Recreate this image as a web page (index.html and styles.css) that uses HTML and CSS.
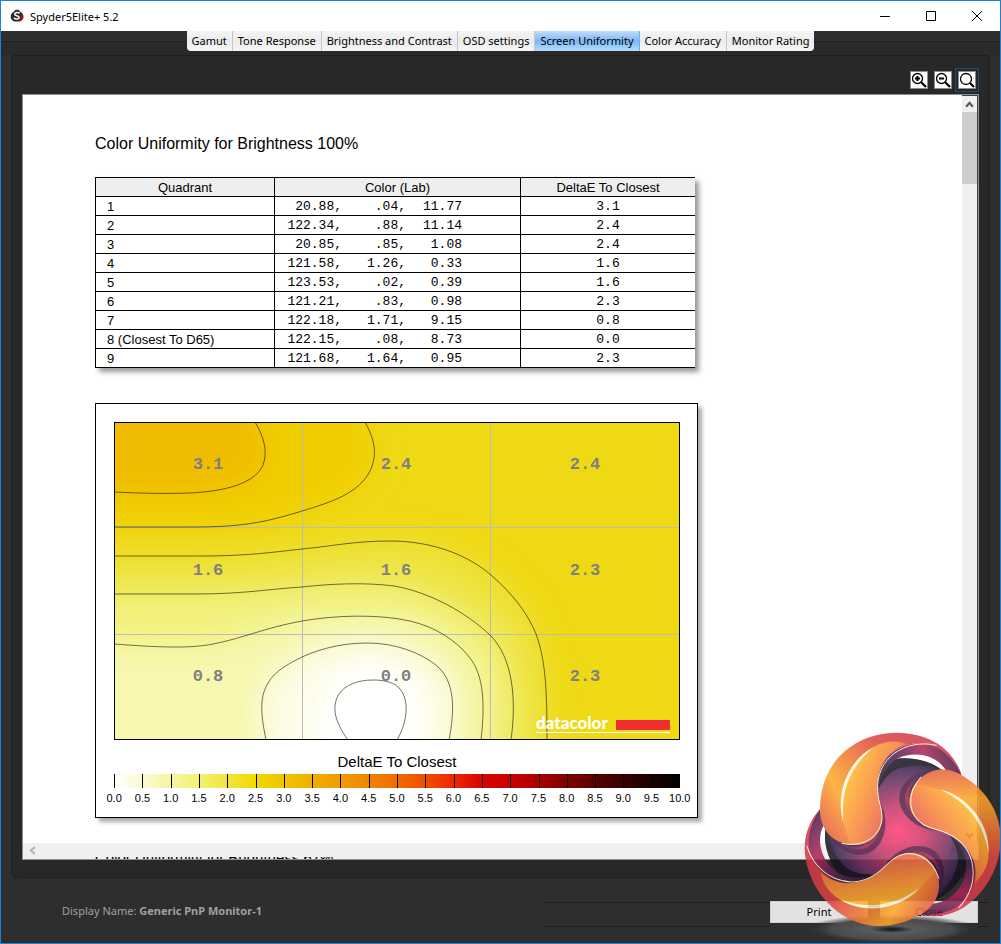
FILE: index.html
```html
<!DOCTYPE html>
<html lang="en">
<head>
<meta charset="utf-8">
<title>Spyder5Elite+ 5.2</title>
<link rel="stylesheet" href="styles.css">
</head>
<body>
<div class="window">
  <header class="titlebar">
    <svg class="app-icon" viewBox="0 0 14 14" aria-hidden="true">
      <path d="M4 2.500L5.500 .8h3L10 2.500l2 1.500 1.200 2v3L12 11l-2 1.500H4L2 11 .8 9V6L2 4z" fill="#2b2629"/>
      <path d="M11 5l2.300 1.500v3L11 12H8l3-3z" fill="#a01425"/>
      <path d="M9.800 4.200C8.500 3 4.800 3 4.600 5.200c0 1.800 4.600 1.300 4.600 3.300 0 1.700-3.500 2-5.400.4" fill="none" stroke="#fff" stroke-width="1.500"/>
    </svg>
    <h1 class="app-title">Spyder5Elite+ 5.2</h1>
    <button class="win-btn" aria-label="Minimize"><svg viewBox="0 0 12 12"><path d="M1 6.500h10"/></svg></button>
    <button class="win-btn" aria-label="Maximize"><svg viewBox="0 0 12 12"><path d="M1.500 1.500h9v9h-9z"/></svg></button>
    <button class="win-btn" aria-label="Close window"><svg viewBox="0 0 12 12"><path d="M1 1l10 10M11 1L1 11"/></svg></button>
  </header>

  <nav class="tabbar">
    <div class="tabs">
      <button class="tab">Gamut</button>
      <button class="tab">Tone Response</button>
      <button class="tab">Brightness and Contrast</button>
      <button class="tab">OSD settings</button>
      <button class="tab active">Screen Uniformity</button>
      <button class="tab">Color Accuracy</button>
      <button class="tab">Monitor Rating</button>
    </div>
  </nav>

  <main class="panel">
    <div class="toolbar">
      <button class="tool" aria-label="Zoom in"><svg viewBox="0 0 16 16"><circle cx="6.500" cy="6.500" r="5"/><path d="M4 6.500h5M6.500 4v5" stroke-width="2"/><path d="M10 10l5 5" stroke-width="2.200"/></svg></button>
      <button class="tool" aria-label="Zoom out"><svg viewBox="0 0 16 16"><circle cx="6.500" cy="6.500" r="5"/><path d="M4 6.500h5" stroke-width="2"/><path d="M10 10l5 5" stroke-width="2.200"/></svg></button>
      <button class="tool focused" aria-label="Zoom to fit"><svg viewBox="0 0 16 16"><circle cx="7" cy="7" r="5.500"/><path d="M11 11l4 4" stroke-width="2.200"/></svg></button>
    </div>

    <div class="report">
      <div class="page">
        <h2 class="heading">Color Uniformity for Brightness 100%</h2>
        <table class="data">
          <colgroup><col class="c-quad"><col class="c-lab"><col class="c-delta"></colgroup>
          <thead><tr><th>Quadrant</th><th>Color (Lab)</th><th>DeltaE To Closest</th></tr></thead>
          <tbody>
            <tr><td>1</td><td class="lab"><span>20.88,</span><span>.04,</span><span>11.77</span></td><td class="num">3.1</td></tr>
            <tr><td>2</td><td class="lab"><span>122.34,</span><span>.88,</span><span>11.14</span></td><td class="num">2.4</td></tr>
            <tr><td>3</td><td class="lab"><span>20.85,</span><span>.85,</span><span>1.08</span></td><td class="num">2.4</td></tr>
            <tr><td>4</td><td class="lab"><span>121.58,</span><span>1.26,</span><span>0.33</span></td><td class="num">1.6</td></tr>
            <tr><td>5</td><td class="lab"><span>123.53,</span><span>.02,</span><span>0.39</span></td><td class="num">1.6</td></tr>
            <tr><td>6</td><td class="lab"><span>121.21,</span><span>.83,</span><span>0.98</span></td><td class="num">2.3</td></tr>
            <tr><td>7</td><td class="lab"><span>122.18,</span><span>1.71,</span><span>9.15</span></td><td class="num">0.8</td></tr>
            <tr><td>8 (Closest To D65)</td><td class="lab"><span>122.15,</span><span>.08,</span><span>8.73</span></td><td class="num">0.0</td></tr>
            <tr><td>9</td><td class="lab"><span>121.68,</span><span>1.64,</span><span>0.95</span></td><td class="num">2.3</td></tr>
          </tbody>
        </table>

        <section class="chart">
          <svg class="plot" viewBox="0 0 566 318" role="img" aria-label="DeltaE contour map">
            <defs>
              <filter id="soft" filterUnits="userSpaceOnUse" x="-120" y="-120" width="800" height="560"><feGaussianBlur stdDeviation="14"/></filter>
              <clipPath id="plotClip"><rect width="566" height="318"/></clipPath>
            </defs>
            <g clip-path="url(#plotClip)">
              <rect width="566" height="318" fill="#efd915"/>
              <g filter="url(#soft)">
                <path fill="#f0cd00" d="M251-90V1C262 20 263 35 256 49C246 68 215 82 188 89C150 101 125 105 80 105H-90V-90z"/>
                <path fill="#f0bc00" d="M141-90V1C150 15 154 30 149 43C143 57 122 69 75 71C45 72 25 71 0 70H-90V-90z"/>
                <path fill="#eee443" d="M-90 134H85C135 134 160 130 188 127C220 124 240 119 276 119C320 119 352 136 377 153C400 174 414 194 422 212C430 234 433 256 433 317V410H-90z"/>
                <path fill="#f2f27e" d="M-90 172H80C130 172 155 167 188 165C215 162 250 160 280 164C315 170 350 188 377 214C396 242 400 268 397 317V410H-90z"/>
                <path fill="#f7f7b0" d="M-90 222H1C40 225 75 227 99 222C125 217 150 206 188 199C220 193 265 190 296 199C320 206 343 221 356 236C368 254 371 280 367 317V410H-90z"/>
                <path fill="#fdfde8" d="M152 410V317C147 293 145 278 154 261C160 252 174 242 188 235C215 223 235 221 254 221C278 222 305 229 323 244C338 262 341 282 335 317V410z"/>
                <path fill="#fff" d="M204 410V317C200 265 219 242 259 239C302 243 315 275 305 317V410z"/>
              </g>
              <g class="grid"><path d="M188.500 0V318M376.500 0V318M0 105.500H566M0 212.500H566"/></g>
              <g class="contours">
                <path d="M141 0C150 15 154 30 149 43C143 57 122 69 75 71C45 72 25 71 0 70"/>
                <path d="M251 0C262 20 263 34 256 49C245 71 218 80 188 89C150 101 125 105 80 105H0"/>
                <path d="M0 134H85C135 134 160 130 188 127C220 124 240 119 276 119C320 119 355 134 377 153C399 172 414 192 422 212C431 237 433 262 433 318"/>
                <path d="M0 172H80C130 172 155 167 188 165C215 162 250 160 280 164C315 170 352 190 377 214C398 236 403 275 397 318"/>
                <path d="M0 222C40 225 75 227 99 222C130 216 150 206 188 199C222 193 265 192 296 199C322 205 343 219 356 236C370 254 371 283 367 318"/>
                <path d="M152 318C147 293 145 276 154 261C161 249 174 242 188 235C210 225 232 221 254 221C280 221 306 230 323 244C341 259 341 288 335 318"/>
                <path d="M234 318C221 300 217 285 225 272C231 263 244 258 259 258C272 258 281 261 286 267C296 279 293 301 283 318"/>
              </g>
              <g class="values">
                <text x="94" y="47">3.1</text><text x="282" y="47">2.4</text><text x="471" y="47">2.4</text>
                <text x="94" y="153">1.6</text><text x="282" y="153">1.6</text><text x="471" y="153">2.3</text>
                <text x="94" y="259">0.8</text><text x="282" y="259">0.0</text><text x="471" y="259">2.3</text>
              </g>
              <text class="brand" x="422" y="307">datacolor</text>
              <rect x="502" y="298" width="54" height="10" fill="#ee2e34"/>
              <path d="M422 310.500H556" stroke="#fff"/>
            </g>
            <rect x=".5" y=".5" width="565" height="317" fill="none" stroke="#000"/>
          </svg>
          <h3 class="legend-title">DeltaE To Closest</h3>
          <div class="scale"></div>
          <ol class="ticks">
            <li>0.0</li><li>0.5</li><li>1.0</li><li>1.5</li><li>2.0</li><li>2.5</li><li>3.0</li><li>3.5</li><li>4.0</li><li>4.5</li><li>5.0</li><li>5.5</li><li>6.0</li><li>6.5</li><li>7.0</li><li>7.5</li><li>8.0</li><li>8.5</li><li>9.0</li><li>9.5</li><li>10.0</li>
          </ol>
        </section>
      </div>
      <div class="vbar">
        <button class="arrow" aria-label="Scroll up"><svg viewBox="0 0 8 8"><path d="M1 6l3-3.500L7 6"/></svg></button>
        <div class="thumb"></div>
        <button class="arrow last" aria-label="Scroll down"><svg viewBox="0 0 8 8"><path d="M1 2l3 3.500L7 2"/></svg></button>
      </div>
      <div class="hbar">
        <button class="arrow dim" aria-label="Scroll left"><svg viewBox="0 0 8 8"><path d="M6 1L2.500 4 6 7"/></svg></button>
        <button class="arrow dim right" aria-label="Scroll right"><svg viewBox="0 0 8 8"><path d="M2 1l3.500 3L2 7"/></svg></button>
      </div>
      <div class="next-page"><span>Color Uniformity for Brightness 67%</span></div>
    </div>
  </main>

  <footer class="footer">
    <p class="display">Display Name: <strong>Generic PnP Monitor-1</strong></p>
    <div class="groove"></div>
    <div class="actions">
      <button class="action">Print</button>
      <button class="action">Close</button>
    </div>
    <div class="groove stub"></div>
  </footer>

  <svg class="watermark" viewBox="0 0 633 672" aria-hidden="true">
    <defs>
      <radialGradient id="core" gradientUnits="userSpaceOnUse" cx="339" cy="335" r="225">
        <stop offset="0" stop-color="#ff3c74"/><stop offset=".3" stop-color="#cf3868"/><stop offset=".62" stop-color="#7c3160"/><stop offset=".85" stop-color="#3a2550"/><stop offset="1" stop-color="#120d24"/>
      </radialGradient>
      <linearGradient id="outer" gradientUnits="userSpaceOnUse" x1="480" y1="70" x2="110" y2="320">
        <stop offset="0" stop-color="#cf3450"/><stop offset=".4" stop-color="#dc4440"/><stop offset=".8" stop-color="#ffa828"/><stop offset="1" stop-color="#e8643c"/>
      </linearGradient>
      <linearGradient id="inner" gradientUnits="userSpaceOnUse" x1="155" y1="240" x2="275" y2="290">
        <stop offset="0" stop-color="#ffb52c"/><stop offset=".5" stop-color="#fa8d37"/><stop offset="1" stop-color="#ea6848"/>
      </linearGradient>
      <linearGradient id="ring" gradientUnits="userSpaceOnUse" x1="265" y1="220" x2="510" y2="130">
        <stop offset="0" stop-color="#25183c"/><stop offset=".3" stop-color="#4a2450"/><stop offset=".65" stop-color="#ae2458"/><stop offset="1" stop-color="#3c1c46"/>
      </linearGradient>
      <linearGradient id="pinkBand" gradientUnits="userSpaceOnUse" x1="400" y1="150" x2="400" y2="325">
        <stop offset="0" stop-color="#2a1c46"/><stop offset=".45" stop-color="#a82656"/><stop offset="1" stop-color="#3a1c46"/>
      </linearGradient>
      <radialGradient id="floor"><stop offset="0" stop-color="#111"/><stop offset=".25" stop-color="#5b5b5b"/><stop offset=".7" stop-color="#4a4a4a"/><stop offset="1" stop-color="#2d2d2d" stop-opacity="0"/></radialGradient>
      <g id="core-arm">
        <path d="M262 330C282 290 252 245 264 190C272 150 296 122 328 116C375 112 425 124 455 150L430 168C375 190 360 240 385 285L445 335L339 355z" fill="url(#core)"/>
        <path d="M266 205C270 150 295 119 330 115C380 112 425 126 455 150C405 132 335 132 303 158C286 172 276 186 266 205z" fill="#191322"/>
        <path d="M261 225C252 140 300 68 400 68C450 75 495 108 515 165L467 150C440 105 372 92 325 115C295 130 270 165 261 225z" fill="url(#ring)"/>
      </g>
      <g id="shade">
        <path d="M450 147C370 150 325 190 328 240C332 286 380 330 445 332L450 250z" fill="#42183c" fill-opacity=".8"/>
        <path d="M452 147C385 152 343 195 345 240C349 284 392 324 445 331L450 250z" fill="url(#pinkBand)"/>
        <path d="M455 147C400 152 355 190 356 238C360 284 400 322 445 330L450 250z" fill="#261a44"/>
      </g>
      <g id="lobe">
        <path d="M90 270C90 120 200 38 320 38C425 40 490 90 514 163C480 100 440 72 385 70C310 72 255 130 262 215C264 245 276 260 276 290C276 340 240 377 190 375C130 372 90 330 90 270z" fill="url(#outer)"/>
        <path d="M185 375C130 260 155 145 235 90C275 64 315 58 350 72C290 90 257 145 262 215C264 245 276 260 276 290C276 340 240 377 185 375z" fill="url(#inner)"/>
        <path d="M160 305C135 225 170 125 250 82C200 125 149 190 160 305z" fill="#fff6dd"/>
        <path d="M440 76C345 55 255 115 263 215C264 245 276 260 276 290C276 345 225 385 155 370" fill="none" stroke="#fff0c4" stroke-width="3"/>
      </g>
    </defs>
    <ellipse cx="305" cy="628" rx="260" ry="44" fill="url(#floor)"/>
    <g class="mark">
      <use href="#core-arm"/><use href="#core-arm" transform="rotate(120 332 339)"/><use href="#core-arm" transform="rotate(240 332 339)"/>
      <use href="#shade"/><use href="#shade" transform="rotate(120 332 339)"/><use href="#shade" transform="rotate(240 332 339)"/>
      <use href="#lobe"/><use href="#lobe" transform="rotate(120 332 339)"/><use href="#lobe" transform="rotate(240 332 339)"/>
    </g>
  </svg>
</div>
</body>
</html>
```
FILE: styles.css
```css
* { box-sizing: border-box; }

body {
  margin: 0;
  font-family: "Noto Sans", "Open Sans", sans-serif;
  font-size: 11px;
  color: #000;
}

button {
  margin: 0;
  padding: 0;
  border: 0;
  font: inherit;
  color: inherit;
}

h1, h2, h3, p, ol { margin: 0; padding: 0; font-weight: normal; }

.window {
  position: relative;
  display: flex;
  flex-direction: column;
  min-height: 100vh;
  overflow: hidden;
  border: 1px solid #1883d7;
  background: #2e2e2e;
}

/* Title bar */
.titlebar {
  display: flex;
  align-items: center;
  height: 30px;
  padding-left: 9px;
  background: #fff;
}
.app-icon { width: 14px; height: 14px; }
.app-title { flex: 1; margin-left: 6px; font-size: 11px; }
.win-btn {
  display: grid;
  place-items: center;
  width: 46px;
  height: 30px;
  background: none;
}
.win-btn svg { width: 12px; height: 12px; fill: none; stroke: #000; }

/* Tabs */
.tabbar {
  display: flex;
  justify-content: center;
  height: 24px;
  background: linear-gradient(#2f2f2f 10px, #212121 10px, #212121 11px, #2a2a2a 11px);
}
.tabs { display: flex; height: 20px; border-radius: 0 0 4px 4px; overflow: hidden; }
.tab {
  padding: 0 5px;
  border-right: 1px solid #c6c6c6;
  background: linear-gradient(#f4f4f4, #ebebeb 50%, #f6f6f6);
  line-height: 20px;
  white-space: nowrap;
}
.tab:last-child { border-right: 0; }
.tab.active { background: linear-gradient(#c2ddfa, #7db8f5 50%, #b5dcff); border-color: #6fb1ee; }

/* Main panel */
.panel {
  flex: 1;
  display: flex;
  flex-direction: column;
  gap: 5px;
  margin: 0 10px;
  padding: 15px 10px 17px;
  border: 1px solid #1f1f1f;
  border-radius: 0 0 6px 6px;
  background: #282828;
}
.toolbar { display: flex; justify-content: flex-end; gap: 6px; padding-right: 3px; }
.tool {
  display: grid;
  place-items: center;
  width: 18px;
  height: 18px;
  border: 1px solid #8c8c8c;
  background: #fff;
}
.tool svg { width: 16px; height: 16px; fill: none; stroke: #000; stroke-width: 1.300; }
.tool.focused { outline: 1px solid #17507f; outline-offset: 2px; }

.report {
  flex: 1;
  display: grid;
  grid-template-columns: 1fr 16px;
  grid-template-rows: 1fr 14px 2px;
  border: 1px solid #8f8f8f;
  background: #fff;
}
.page { padding: 38px 24px 20px 72px; }
.heading { font: 16px/22px "Liberation Sans", Arial, sans-serif; }

.data {
  width: 600px;
  margin-top: 22px;
  border-collapse: collapse;
  table-layout: fixed;
  font: 13px/16px "Liberation Sans", Arial, sans-serif;
  box-shadow: 4px 4px 5px #999;
  background: #fff;
}
.c-quad { width: 179px; }
.c-lab { width: 246px; }
.data th, .data td {
  height: 19px;
  padding: 2px 0 0 11px;
  border: 1px solid #000;
  text-align: left;
  font-weight: normal;
}
.data th:last-child, .data td:last-child { border-right: 0; }
.data th { padding: 2px 0 0; background: #eee; text-align: center; }
.data .lab, .data .num { font-family: "Liberation Mono", "Courier New", monospace; }
.data .num { padding: 2px 0 0; text-align: center; }
.lab span { display: inline-block; width: 56px; text-align: right; }
.lab span:nth-child(2) { width: 64px; }

/* Contour chart */
.chart {
  width: 603px;
  margin-top: 35px;
  padding: 18px 17px 11px 18px;
  border: 1px solid #000;
  background: #fff;
  box-shadow: 4px 4px 4px #aaa;
  font-family: "Liberation Sans", Arial, sans-serif;
}
.plot { display: block; width: 100%; }
.grid path { stroke: #bbb; fill: none; }
.contours path { fill: none; stroke: #000; stroke-opacity: .55; }
.values text {
  font: bold 17px "Liberation Mono", monospace;
  fill: #808080;
  text-anchor: middle;
}
.brand { font: 900 17px Lato, sans-serif; fill: #fff; }
.legend-title { font-size: 15px; line-height: 24px; margin-top: 10px; text-align: center; }
.scale {
  height: 14px;
  background:
    repeating-linear-gradient(90deg, #000 0 1px, transparent 1px 5%),
    linear-gradient(90deg, #fff, #fafad2 5%, #f6f6a4 10%, #f1f170 15%, #f0e540 20%, #f0da00 25%, #f0c400 30%, #f0ae00 35%, #f09c00 40%, #f08400 45%, #f06c00 50%, #f04e00 55%, #ec2800 60%, #d80400 65%, #c80000 70%, #a80000 75%, #800000 80%, #580000 85%, #380000 90%, #1c0000 95%, #000);
}
.ticks {
  display: flex;
  margin: 2px -14px 0;
  list-style: none;
  font-size: 11px;
  line-height: 16px;
  text-align: center;
}
.ticks li { flex: 1 1 0; }

/* Scroll bars */
.vbar { display: flex; flex-direction: column; background: #f0f0f0; border-top: 1px solid #444; border-right: 1px solid #444; }
.hbar { grid-column: 1 / -1; display: flex; justify-content: space-between; padding: 0 18px 0 1px; background: #f0f0f0; }
.arrow { display: grid; place-items: center; width: 14px; height: 16px; background: none; }
.arrow svg { width: 9px; height: 9px; fill: none; stroke: #555; stroke-width: 1.800; }
.arrow.dim { width: 16px; height: 14px; }
.arrow.dim svg { stroke: #b5b5b5; }
.thumb { height: 72px; background: #cdcdcd; }
.arrow.last { margin-top: auto; }
.next-page {
  grid-column: 1 / -1;
  display: flex;
  align-items: center;
  height: 2px;
  padding-left: 72px;
  overflow: hidden;
  background: #f0f0f0;
  font: 15px/20px "Liberation Sans", Arial, sans-serif;
}

/* Footer */
.footer { display: flex; align-items: center; height: 65px; padding-left: 61px; }
.display { flex: 1; color: #a0a0a0; }
.display strong { font-weight: bold; }
.groove { width: 226px; height: 25px; margin-top: 7px; border: solid #202020; border-width: 1px 0; }
.groove.stub { width: 11px; margin-right: 11px; }
.actions { display: flex; gap: 12px; margin-top: 2px; }
.action { width: 98px; height: 22px; background: #e2e2e2; border: 1px solid #d0d0d0; }

.watermark {
  position: absolute;
  right: -1px;
  bottom: -1px;
  width: 211px;
  height: 224px;
  pointer-events: none;
}
.mark { opacity: .86; }
```
